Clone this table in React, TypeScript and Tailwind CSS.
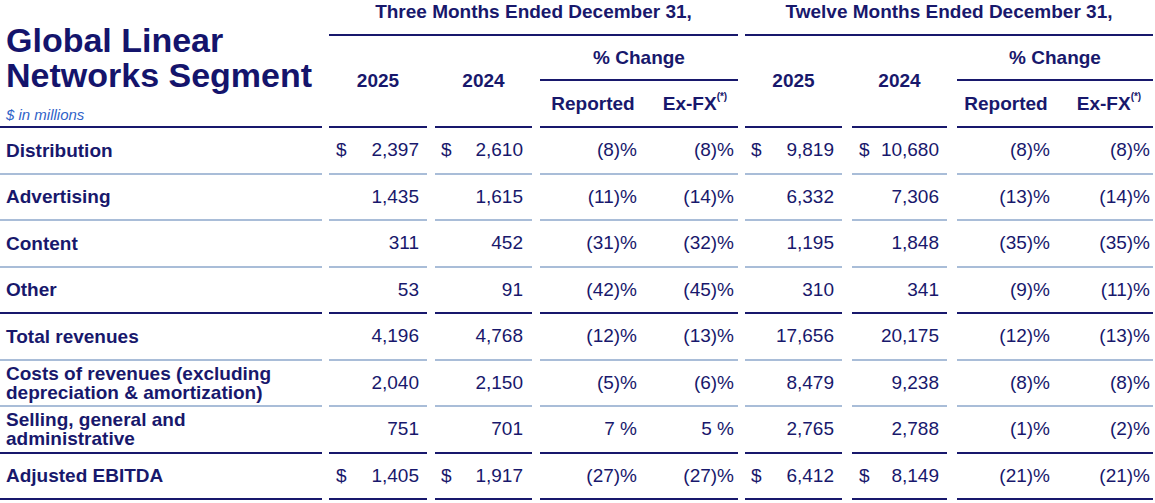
import React from "react";

// column template shared by header and body rows
const COLS =
  "grid grid-cols-[322px_105px_105px_106px_100px_104px_105px_108px_98px]";

const CELL_ML = [
  "ml-[7px]",
  "ml-[8px]",
  "ml-[8px]",
  "",
  "ml-[7px]",
  "ml-[10px]",
  "ml-[10px]",
  "",
];

const NUM_PR = [
  "pr-[8px]",
  "pr-[9px]",
  "pr-[1px]",
  "pr-[4px]",
  "pr-[8px]",
  "pr-[8px]",
  "pr-[5px]",
  "pr-[3px]",
];

const DOLLAR_PL = [
  "pl-[7px]",
  "pl-[6px]",
  "",
  "",
  "pl-[6px]",
  "pl-[7px]",
  "",
  "",
];

type Row = {
  label: React.ReactNode;
  values: string[];
  dollar?: boolean;
  dark?: boolean;
};

const ROWS: Row[] = [
  {
    label: "Distribution",
    dollar: true,
    values: ["2,397", "2,610", "(8)%", "(8)%", "9,819", "10,680", "(8)%", "(8)%"],
  },
  {
    label: "Advertising",
    values: ["1,435", "1,615", "(11)%", "(14)%", "6,332", "7,306", "(13)%", "(14)%"],
  },
  {
    label: "Content",
    values: ["311", "452", "(31)%", "(32)%", "1,195", "1,848", "(35)%", "(35)%"],
  },
  {
    label: "Other",
    dark: true,
    values: ["53", "91", "(42)%", "(45)%", "310", "341", "(9)%", "(11)%"],
  },
  {
    label: "Total revenues",
    values: ["4,196", "4,768", "(12)%", "(13)%", "17,656", "20,175", "(12)%", "(13)%"],
  },
  {
    label: (
      <>
        Costs of revenues (excluding
        <br />
        depreciation &amp; amortization)
      </>
    ),
    values: ["2,040", "2,150", "(5)%", "(6)%", "8,479", "9,238", "(8)%", "(8)%"],
  },
  {
    label: (
      <>
        Selling, general and
        <br />
        administrative
      </>
    ),
    dark: true,
    values: ["751", "701", "7 %", "5 %", "2,765", "2,788", "(1)%", "(2)%"],
  },
  {
    label: "Adjusted EBITDA",
    dollar: true,
    dark: true,
    values: ["1,405", "1,917", "(27)%", "(27)%", "6,412", "8,149", "(21)%", "(21)%"],
  },
];

function Header() {
  return (
    <div className={`${COLS} grid-rows-[36px_45px_47px] font-bold`}>
      {/* title block */}
      <div className="col-start-1 row-start-1 row-span-3 border-b-2 border-[#18186c] pl-[6px] pt-[23px]">
        <div className="text-[34px] leading-[35px] font-bold text-[#14146c]">
          Global Linear
          <br />
          Networks Segment
        </div>
        <div className="mt-[13px] text-[15px] leading-[18px] italic font-normal text-[#2f62c8]">
          $ in millions
        </div>
      </div>

      <div className="col-start-2 col-span-4 row-start-1 ml-[7px] border-b-2 border-[#18186c] flex justify-center items-start leading-[22px] pt-[1px]">
        Three Months Ended December 31,
      </div>
      <div className="col-start-6 col-span-4 row-start-1 ml-[7px] border-b-2 border-[#18186c] flex justify-center items-start leading-[22px] pt-[1px]">
        Twelve Months Ended December 31,
      </div>

      <div className="col-start-2 row-start-2 row-span-2 ml-[7px] border-b-2 border-[#18186c] flex items-center justify-center leading-[22px]">
        2025
      </div>
      <div className="col-start-3 row-start-2 row-span-2 ml-[8px] border-b-2 border-[#18186c] flex items-center justify-center leading-[22px]">
        2024
      </div>
      <div className="col-start-4 col-span-2 row-start-2 ml-[8px] border-b-2 border-[#18186c] flex items-center justify-center leading-[22px]">
        % Change
      </div>
      <div className="col-start-4 row-start-3 ml-[8px] border-b-2 border-[#18186c] flex items-center justify-center pl-[8px] leading-[22px]">
        Reported
      </div>
      <div className="col-start-5 row-start-3 border-b-2 border-[#18186c] flex items-center justify-center pl-[14px] leading-[22px]">
        Ex-FX<sup className="text-[10px] top-[-0.7em]">(*)</sup>
      </div>

      <div className="col-start-6 row-start-2 row-span-2 ml-[7px] border-b-2 border-[#18186c] flex items-center justify-center leading-[22px]">
        2025
      </div>
      <div className="col-start-7 row-start-2 row-span-2 ml-[10px] border-b-2 border-[#18186c] flex items-center justify-center leading-[22px]">
        2024
      </div>
      <div className="col-start-8 col-span-2 row-start-2 ml-[10px] border-b-2 border-[#18186c] flex items-center justify-center leading-[22px]">
        % Change
      </div>
      <div className="col-start-8 row-start-3 ml-[10px] border-b-2 border-[#18186c] flex items-center justify-center leading-[22px]">
        Reported
      </div>
      <div className="col-start-9 row-start-3 border-b-2 border-[#18186c] flex items-center justify-center pl-[10px] leading-[22px]">
        Ex-FX<sup className="text-[10px] top-[-0.7em]">(*)</sup>
      </div>
    </div>
  );
}

function BodyRow({ row }: { row: Row }) {
  const line = row.dark ? "border-[#18186c]" : "border-[#a9bdd8]";
  return (
    <div className={`${COLS} h-[46.5px]`}>
      <div
        className={`border-b-2 ${line} pl-[6px] flex items-center font-bold leading-[19px]`}
      >
        <div>{row.label}</div>
      </div>
      {row.values.map((v, i) => (
        <div
          key={i}
          className={`border-b-2 ${line} ${CELL_ML[i]} ${NUM_PR[i]} flex items-center justify-between leading-[22px]`}
        >
          <span className={DOLLAR_PL[i]}>
            {row.dollar && DOLLAR_PL[i] ? "$" : ""}
          </span>
          <span className="whitespace-pre">{v}</span>
        </div>
      ))}
    </div>
  );
}

export default function App() {
  return (
    <div
      className="w-[1155px] h-[503px] bg-white overflow-hidden text-[19px] text-[#18186c]"
      style={{ fontFamily: '"Liberation Sans", Arial, sans-serif' }}
    >
      <Header />
      {ROWS.map((r, i) => (
        <BodyRow key={i} row={r} />
      ))}
    </div>
  );
}
